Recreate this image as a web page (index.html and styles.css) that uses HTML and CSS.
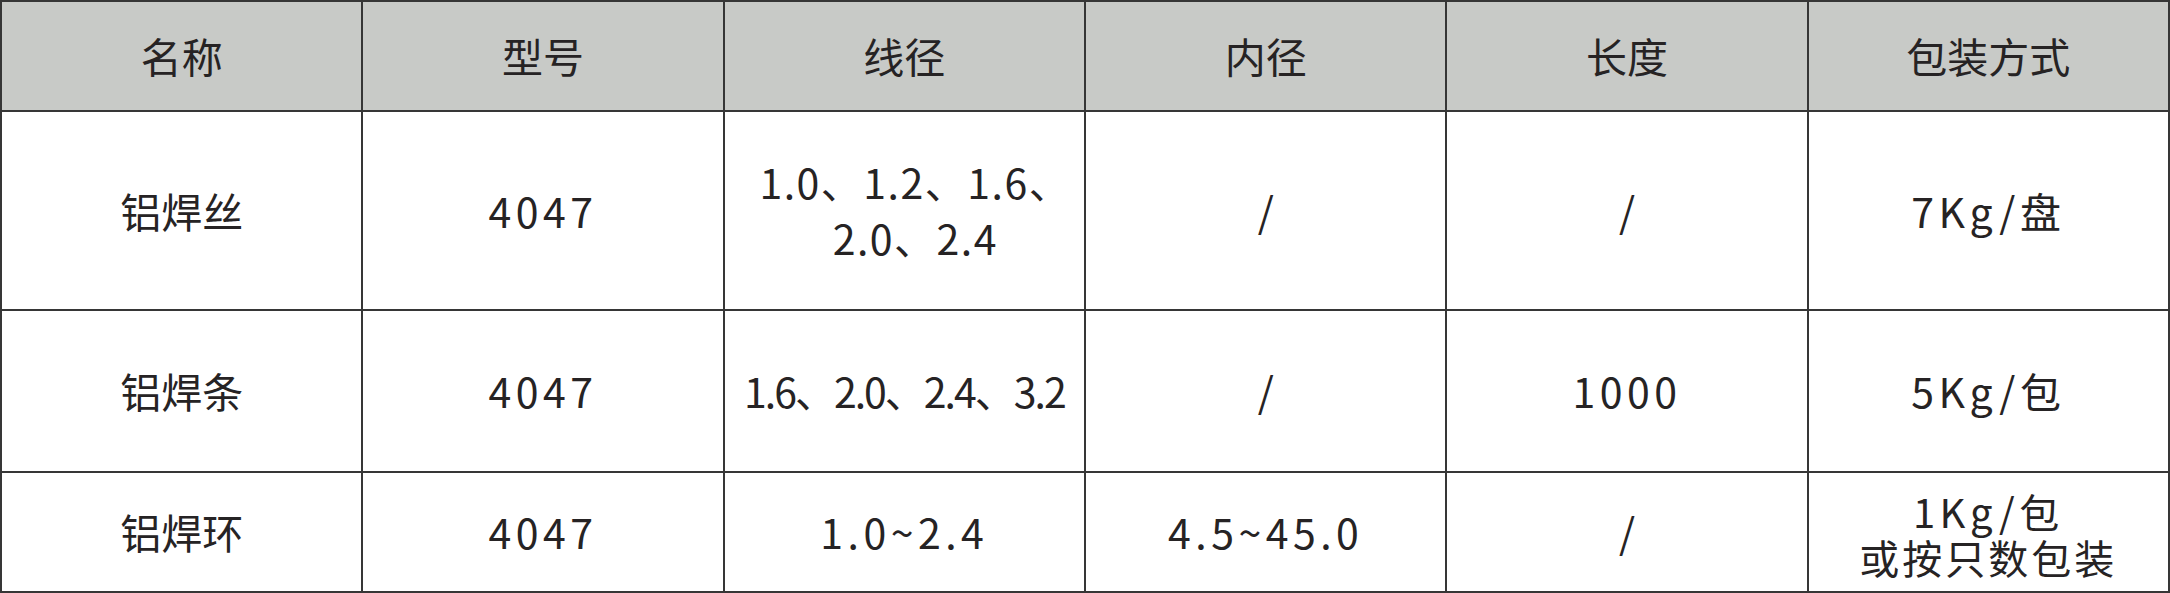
FILE: index.html
```html
<!DOCTYPE html>
<html lang="zh-CN">
<head>
<meta charset="utf-8">
<title>铝焊材规格</title>
<link rel="stylesheet" href="styles.css">
</head>
<body>
<div class="spec-table">
  <div class="cell head"><span>名称</span></div>
  <div class="cell head"><span>型号</span></div>
  <div class="cell head"><span>线径</span></div>
  <div class="cell head"><span>内径</span></div>
  <div class="cell head"><span>长度</span></div>
  <div class="cell head"><span>包装方式</span></div>

  <div class="cell"><span>铝焊丝</span></div>
  <div class="cell num"><span>4047</span></div>
  <div class="cell num multi"><span>1.0、1.2、1.6、<br>2.0、2.4</span></div>
  <div class="cell"><span>/</span></div>
  <div class="cell"><span>/</span></div>
  <div class="cell num"><span>7Kg/盘</span></div>

  <div class="cell"><span>铝焊条</span></div>
  <div class="cell num"><span>4047</span></div>
  <div class="cell tight"><span>1.6、2.0、2.4、3.2</span></div>
  <div class="cell"><span>/</span></div>
  <div class="cell num"><span>1000</span></div>
  <div class="cell num"><span>5Kg/包</span></div>

  <div class="cell"><span>铝焊环</span></div>
  <div class="cell num"><span>4047</span></div>
  <div class="cell num"><span>1.0~2.4</span></div>
  <div class="cell num"><span>4.5~45.0</span></div>
  <div class="cell"><span>/</span></div>
  <div class="cell num multi2">
    <div class="stack">
      <span class="line">1Kg/包</span>
      <span class="line sub">或按只数包装</span>
    </div>
  </div>
</div>
</body>
</html>
```
FILE: styles.css
```css
html, body {
  margin: 0;
  padding: 0;
  background: #ffffff;
}

.spec-table {
  display: grid;
  grid-template-columns: repeat(6, 1fr);
  grid-template-rows: 108px 197px 160px 118px;
  gap: 2px;
  padding: 2px;
  width: 2170px;
  height: 593px;
  box-sizing: border-box;
  background: #363636;
  font-family: "Noto Sans CJK SC", "Noto Sans", sans-serif;
  color: #262324;
}

.cell {
  display: flex;
  align-items: center;
  justify-content: center;
  text-align: center;
  background: #ffffff;
  font-size: 41px;
  line-height: 1.2;
}

.head {
  background: #c8cac7;
  font-size: 41px;
}

.num {
  letter-spacing: 4.5px;
}

.multi {
  line-height: 56px;
  letter-spacing: 1.5px;
  padding-left: 22px;
  padding-bottom: 4px;
}

.tight {
  letter-spacing: -2px;
}

.multi2 {
  padding-top: 4px;
}

.stack {
  display: flex;
  flex-direction: column;
  align-items: center;
  gap: 0;
}

.line {
  display: block;
  height: 46px;
  line-height: 46px;
  font-size: 40px;
}

.sub {
  letter-spacing: 3px;
}
```
